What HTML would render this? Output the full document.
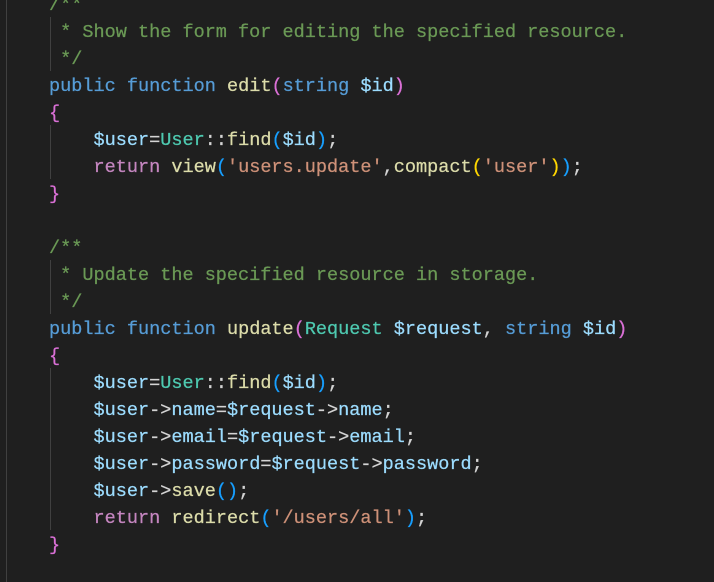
<!DOCTYPE html>
<html><head><meta charset="utf-8"><style>
html,body{margin:0;padding:0;background:#1f1f1f;width:714px;height:582px;overflow:hidden}
.code{position:absolute;left:49px;top:-8px;font-family:"Liberation Mono",monospace;font-size:18.55px;line-height:27px;color:#d4d4d4;white-space:pre;-webkit-text-stroke:0.25px}
.c{color:#6a9955}.k{color:#569cd6}.f{color:#dcdcaa}.v{color:#9cdcfe}.t{color:#4ec9b0}.s{color:#ce9178}.r{color:#c586c0}
.p{color:#da70d6}.b{color:#179fff}.y{color:#ffd700}
.g{position:absolute;width:1px;background:#404040}
</style></head><body>
<div class="g" style="left:6px;top:0;height:582px"></div>
<div class="g" style="left:50px;top:17px;height:54px"></div>
<div class="g" style="left:50px;top:260px;height:54px"></div>
<div class="g" style="left:50px;top:125px;height:54px"></div>
<div class="g" style="left:50px;top:368px;height:162px"></div>
<div class="code"><span class="c">/**</span>
<span class="c"> * Show the form for editing the specified resource.</span>
<span class="c"> */</span>
<span class="k">public</span> <span class="k">function</span> <span class="f">edit</span><span class="p">(</span><span class="k">string</span> <span class="v">$id</span><span class="p">)</span>
<span class="p">{</span>
    <span class="v">$user</span>=<span class="t">User</span>::<span class="f">find</span><span class="b">(</span><span class="v">$id</span><span class="b">)</span>;
    <span class="r">return</span> <span class="f">view</span><span class="b">(</span><span class="s">'users.update'</span>,<span class="f">compact</span><span class="y">(</span><span class="s">'user'</span><span class="y">)</span><span class="b">)</span>;
<span class="p">}</span>

<span class="c">/**</span>
<span class="c"> * Update the specified resource in storage.</span>
<span class="c"> */</span>
<span class="k">public</span> <span class="k">function</span> <span class="f">update</span><span class="p">(</span><span class="t">Request</span> <span class="v">$request</span>, <span class="k">string</span> <span class="v">$id</span><span class="p">)</span>
<span class="p">{</span>
    <span class="v">$user</span>=<span class="t">User</span>::<span class="f">find</span><span class="b">(</span><span class="v">$id</span><span class="b">)</span>;
    <span class="v">$user</span>-&gt;<span class="v">name</span>=<span class="v">$request</span>-&gt;<span class="v">name</span>;
    <span class="v">$user</span>-&gt;<span class="v">email</span>=<span class="v">$request</span>-&gt;<span class="v">email</span>;
    <span class="v">$user</span>-&gt;<span class="v">password</span>=<span class="v">$request</span>-&gt;<span class="v">password</span>;
    <span class="v">$user</span>-&gt;<span class="f">save</span><span class="b">()</span>;
    <span class="r">return</span> <span class="f">redirect</span><span class="b">(</span><span class="s">'/users/all'</span><span class="b">)</span>;
<span class="p">}</span></div>
</body></html>
